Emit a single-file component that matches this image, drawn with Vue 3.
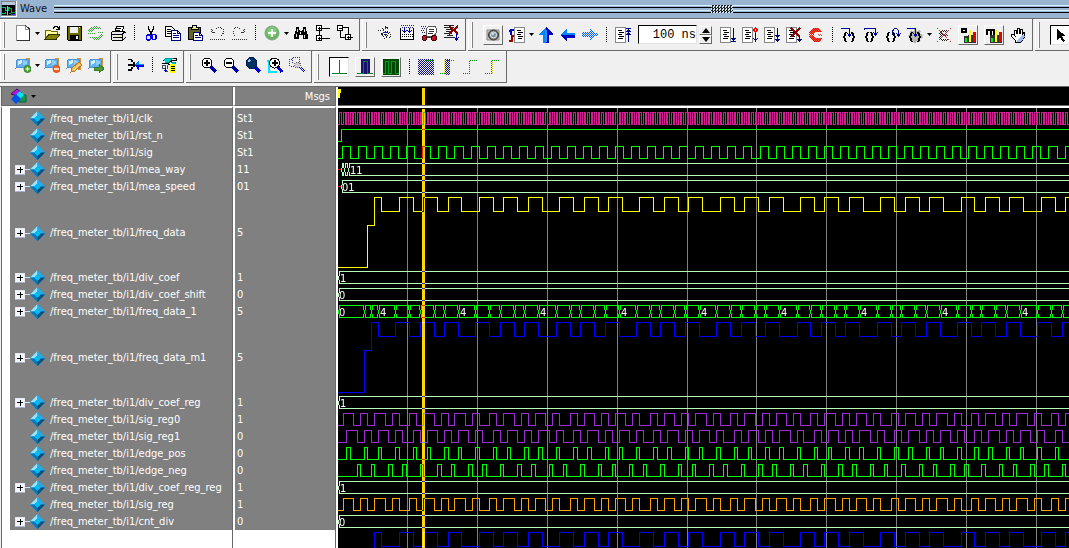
<script setup>
import { computed, onBeforeUnmount, onMounted, ref } from 'vue'

const ORIGIN = 338
const END = 2600
const CLK = 3.49

const span = ref(window.innerWidth - ORIGIN)
const measure = () => { span.value = window.innerWidth - ORIGIN }
onMounted(() => window.addEventListener('resize', measure))
onBeforeUnmount(() => window.removeEventListener('resize', measure))

const braceL = 'M4 5h2v1H5v3H4v2h1v3h1v1H4v-1H3v-3H2v-2h1V6h1z'
const braceR = 'M12 5h-2v1h1v3h1v2h-1v3h-1v1h2v-1h1v-3h1V9h-1V6h-1z'
const page = '<path d="M.5.500h10v15H.5z" fill="#fff" stroke="#888"/><path d="M3 3.500h4M4 5.500h5M3 7.500h4M4 9.500h5M3 11.500h5" stroke="#000"/>'
const flag = '<path d="M11 1h4v12h-3z" fill="#cf9440"/><path d="M12 2h1v10h-1z" fill="#f0c070"/><path d="M2 3l5-1 6 1v8l-6-1-6 1z" fill="#63b4ee" stroke="#4f90d6"/><path d="M3 4l4-1v3L3 8z" fill="#d8f1ff"/><path d="M8 3l4 1v3L8 8z" fill="#8fd0fa"/>'
const bars = '<path d="M4 8h12v8H4z" fill="#333"/><path d="M5 11h2v4H5z" fill="#0e0"/><path d="M9 3h2v12H9z" fill="#ff0"/><path d="M13 5h3v10h-3z" fill="#e00"/>'
const bug = '<circle cx="3.500" cy="13" r="2.500" fill="#c01030" stroke="#400"/><circle cx="13" cy="13" r="2.500" fill="#c01030" stroke="#400"/>'

function dither(x0, y0, rows, color) {
  let d = ''
  rows.forEach(([from, to], r) => {
    for (let x = from; x < to; x++) if ((x + r) % 2 === 0) d += `M${x0 + x} ${y0 + r}h1v1h-1z`
  })
  return `<path d="${d}" fill="${color}"/>`
}
const fill = (n, from, to) => Array.from({ length: n }, () => [from, to])

const icons = {
  fresh: '<path d="M2 1h8l4 4v11H2z" fill="#fff"/><path d="M1.500 16V.500H10M10.500 1v3.500H14" fill="none" stroke="#909090"/><path d="M2 15.500h12.500V4M14.500 4L10.500 .5" fill="none" stroke="#333"/>',
  open: '<path d="M1 5h5l1 1h6v3H5l-4 5z" fill="#ffff9c" stroke="#6b6b00"/><path d="M1 14.500L5 9.500h11l-4 5z" fill="#848400" stroke="#313100"/><path d="M9 3.500l2-2h2l2 2M15.500 1v3H12" fill="none" stroke="#000"/>',
  save: '<path d="M1 1h14v14H2l-1-1z" fill="#6b6b00" stroke="#000"/><path d="M4 2h8v6H4z" fill="#efefef"/><path d="M4 10h9v5H4z" fill="#000"/><path d="M10 11h2v3h-2z" fill="#eee"/><path d="M13 2h1v1h-1z" fill="#fff"/>',
  refresh: dither(0, 1, [[5, 10], [3, 12], [2, 14], [1, 6], [0, 5], [1, 4], [9, 16]], '#3fa33f') + dither(0, 8, [[0, 7], [12, 15], [11, 16], [10, 15], [2, 14], [4, 13], [6, 11]], '#3fa33f'),
  print: '<path d="M5 6l2-5h7l-2 6" fill="#fff" stroke="#000"/><path d="M7 3.500h4M6 5.500h4" stroke="#000"/><path d="M1 8l2-2h11l2 2v4l-3 3H2l-1-1z" fill="#e8e8e8" stroke="#000"/><path d="M1 9.500h11l3-3M3 12.500h9M12 15v-5" fill="none" stroke="#000"/><path d="M9 11h2v1H9z" fill="#ff0"/>',
  cut: '<path d="M5.500 1v3l4 6M10.500 1v3l-4 6" fill="none" stroke="#000" stroke-width="1.500"/><g fill="none" stroke="#00f" stroke-width="1.500"><ellipse cx="5.500" cy="12.500" rx="2" ry="2.500"/><ellipse cx="11" cy="12" rx="2" ry="2.500"/></g>',
  copy: '<path d="M.5 1.500h6l3 3v7h-9z" fill="#fff" stroke="#000"/><path d="M2 4.500h4M2 6.500h5M2 8.500h5" stroke="#000"/><path d="M6.500 5.500h6l3 3v7h-9z" fill="#fff" stroke="#00007b"/><path d="M8 8.500h3M8 10.500h6M8 12.500h6M12.500 6v2.500H15" fill="none" stroke="#00007b"/>',
  paste: '<path d="M1 2h12v12H1z" fill="#63632b" stroke="#000"/><path d="M4 2.500h1l1-2h3l1 2h1v2H4z" fill="#e7e78c" stroke="#000"/><path d="M6.500 7.500h6l3 3v5h-9z" fill="#fff" stroke="#00007b"/><path d="M8 10.500h3M8 12.500h6M12.500 8v2.500H15" fill="none" stroke="#00007b"/>',
  undo: '<path d="M2.500 3.500v4M3 7.500h4M3 5.500l2 2M7 3.500l2-1h3l2 2v4l-2 3M1 14.500h15" fill="none" stroke="#333" stroke-dasharray="1 1"/>',
  redo: '<path d="M13.500 3.500v4M13 7.500H9M13 5.500l-2 2M9 3.500l-2-1H4l-2 2v4l2 3M1 14.500h15" fill="none" stroke="#333" stroke-dasharray="1 1"/>',
  plus: '<g shape-rendering="auto"><circle cx="8" cy="8" r="7" fill="#62b75c" stroke="#8fa08c"/><circle cx="8" cy="7" r="5" fill="#82cd79"/><path d="M8 4v8M4 8h8" stroke="#fff" stroke-width="2"/></g>',
  find: '<path d="M3 2h3v2l1 2h2l1-2V2h3v3l2 5v4h-5v-4H6v4H1v-4l2-5z" fill="#000"/><path d="M4.500 4v3M3.500 9v3M11.500 4v3M11.500 10v3" stroke="#ddd"/><path d="M7.500 7v2" stroke="#fff"/>',
  tree: '<path d="M1.500.5h5v5h-5zM1.500 10.500h5v5h-5z" fill="#fff" stroke="#000"/><path d="M3 3.500h3M4.500 2v3M3 13.500h3M4.500 12v3M7 3.500h8M7 13.500h8M4.500 6v4" stroke="#000"/>',
  nodes: '<path d="M.5.5h5v5h-5zM8.500 9.500h5v5h-5z" fill="#fff" stroke="#000"/><path d="M2 3.500h3M10 12.500h3M11.500 11v3M6 2.500h5.500V9M3.500 6v6.500H8M14 12.500h2" fill="none" stroke="#000"/>',
  restart: '<path d="M1 5h3l3 3-3 2M4 8l4 6M5 3l4 4-2 3 4 3M8 1l3 2-3 3 5 2-3 3M11 8l4 2-4 4" fill="none" stroke="#222" stroke-dasharray="1 1"/><path d="M9 2L6 7h4l-2 5" fill="none" stroke="#22a" stroke-dasharray="2 1"/>',
  chip: '<path d="M1 7h14v7H1z" fill="#fff"/><path d="M1.500 3v11h13V3M1 14.500h14" fill="none" stroke="#000"/><path d="M2 .5h13M3 2.500h12" stroke="#228" stroke-dasharray="1 1"/><path d="M3 9.500h11M3 11.500h11" stroke="#000" stroke-dasharray="1 1"/><path d="M5.500 3v5M10.500 3v5M3.500 5.500l2 2 2-2M8.500 5.500l2 2 2-2" fill="none" stroke="#0000a0"/>',
  script: '<path d="M6 3l2-2h6l1 2v5l-2 3H5z" fill="#fff" stroke="#555"/><path d="M0 1.500h5M1 3.500h4M0 5.500h4M1 7.500h4" stroke="#226" stroke-dasharray="1 1"/><path d="M8 4.500h5M8 6.500h5M7 8.500h5M5 12.500h6" stroke="#333"/>' + bug,
  dropdoc: '<path d="M1 2.500h10M1 .5h10M3 4.500h8M3 6.500h6M1 8.500h8M4 10.500h6M1 12.500h10" stroke="#222"/><path d="M13.500 9v6M11.500 12.500l2 3 2-3" fill="none" stroke="#0000a0"/><path d="M6 1l9 8M15 1L6 9" stroke="#8b0000" stroke-width="2"/>',
  camera: '<g shape-rendering="auto"><path d="M2 3h12v10H2z" fill="#c2c2c2" stroke="#8a8a8a"/><circle cx="8.500" cy="8" r="5" fill="#777" stroke="#333"/><circle cx="8.500" cy="8" r="3" fill="#799097" stroke="#eee"/><circle cx="8" cy="7" r="1.200" fill="#cde"/></g>',
  step: '<path d="M5.500.5h10v15h-10z" fill="#fff" stroke="#888"/><path d="M8 3.500h4M9 5.500h5M8 7.500h4M9 9.500h5M9 11.500h4" stroke="#000"/><path d="M5 3H2v5M0 4.500L2 2.500" fill="none" stroke="#00c" stroke-width="2"/><path d="M0 14h3V9h2" fill="none" stroke="#900" stroke-width="2"/>',
  up: '<path d="M8 0l7 7v1h-4v8H5V8H1V7z" fill="#0084ff"/><path d="M8 0l7 7v1h-4v8H8z" fill="#0000bd"/><path d="M7 3h2v12H7z" fill="#2194ff"/>',
  left: '<path d="M0 8l7-6v4h8v5H7v4z" fill="#0084ff"/><path d="M0 8h15v3H7v4z" fill="#0000bd"/>',
  right: dither(0, 2, [[8, 9], [8, 11], [8, 12], [0, 13], [0, 15], [0, 16], [0, 15], [0, 13], [8, 12], [8, 11], [8, 9]], '#0060ff'),
  docup: page + '<path d="M13.500 2v13M11 1.500h5M11.500 5l2-2 2 2M11.500 8l2-2 2 2" fill="none" stroke="#00007b"/>',
  docdown: page + '<path d="M13.500 1v13M11 14.500h5M11.500 11l2 2 2-2" fill="none" stroke="#00007b"/>',
  docdiamond: page + '<path d="M13.500 6v8M11.500 11l2 3 2-3" fill="none" stroke="#00007b"/><path d="M13.500 1l2 2-2 2-2-2z" fill="#fff" stroke="#e00"/>',
  docall: page + '<path d="M13.500 1v14M11.500 8l2 2 2-2M11.500 12l2 2 2-2" fill="none" stroke="#00007b"/>',
  docstop: page + '<path d="M13.500 9v6M11.500 12l2 2 2-2" fill="none" stroke="#00007b"/><path d="M5 1l9 9M14 1L5 10" stroke="#8b0000" stroke-width="2"/>',
  stop: dither(1, 1, [[4, 10], [3, 11], [2, 12], [1, 13], [0, 6], [0, 5], [0, 5], [0, 5], [0, 5], [0, 6], [1, 13], [2, 12], [3, 11], [4, 10]], '#f01000') + dither(2, 1, [[4, 10], [3, 11], [2, 11], [1, 12], [0, 5], [0, 4], [8, 12], [8, 12], [0, 4], [0, 5], [1, 12], [2, 11], [3, 11], [4, 10]], '#e85040'),
  into: `<path d="${braceL}${braceR}"/><path d="M0 1.500h8.500V9M6.500 6.500l2 3 2-3" fill="none" stroke="#0000a0"/><path d="M7 7h3v1H7z" fill="#0000a0"/>`,
  over: `<path d="${braceL}"/><path d="${braceR}" transform="translate(-3 0)"/><path d="M1 3V1.500h11.500V8M10.500 5.500l2 3 2-3" fill="none" stroke="#0000a0"/><path d="M11 6h3v1h-3z" fill="#0000a0"/>`,
  out: `<path d="${braceL}" transform="translate(-1 0)"/><path d="${braceR}" transform="translate(-3 0)"/><path d="M7.500 8V4l2-2.500h2l2 2V9M11.500 6.500l2 3 2-3" fill="none" stroke="#0000a0"/><path d="M12 7h3v1h-3z" fill="#0000a0"/>`,
  gear: `<g shape-rendering="auto"><circle cx="8.500" cy="9" r="5.500" fill="#b5b5b5" stroke="#aaa" stroke-width="3" stroke-dasharray="2 2"/></g><path d="${braceL}${braceR}"/><path d="M0 1.500h8.500V9M6.500 6.500l2 3 2-3" fill="none" stroke="#0000a0"/><path d="M7 7h3v1H7z" fill="#0000a0"/>`,
  nobug: dither(2, 3, [[3, 9], [2, 10], [1, 4], [1, 4], [2, 9], [3, 10], [2, 5], [1, 4], [1, 4], [2, 10], [3, 9]], '#222') + '<path d="M1 1l14 14M15 1L1 15" stroke="#a33" stroke-dasharray="2 1"/>',
  perf: bars + '<path d="M1 8V1h6v5H1z"/><path d="M3 3h2v1H3zM3 6h5v3H3z" fill="#f0f0f0"/>',
  mem: bars + '<path d="M0 8V2h9v6H7V4H5.500v4h-2V4H2v4z"/>',
  hand: '<path d="M5 15v-2L1 9V7h2l2 2-1-6h2l1 4V1h2l1 6 1-5h1v6l2-3h1l-1 6-3 4z" fill="#fff" stroke="#000"/><path d="M6 14l6-6 3 1-4 6H7z" fill="#9ebcf0"/>',
  pointer: '<path d="M5 2v11l3-3 3 5 2-1-3-5h4z" fill="#000"/>',
  markAdd: flag + '<g shape-rendering="auto"><circle cx="12.500" cy="12" r="3.500" fill="#54a83c" stroke="#387d28"/><path d="M12.500 10v4M10.500 12h4" stroke="#fff"/></g>',
  markDel: flag + '<g shape-rendering="auto"><circle cx="12.500" cy="12" r="3.500" fill="#f26522" stroke="#d44a10"/><path d="M10 12h5" stroke="#fff" stroke-width="1.500"/></g>',
  markEdit: flag + '<path d="M5 15l1-4 7-6 3 3-7 6z" fill="#f3bb57" stroke="#b8792b"/><path d="M8 13l6-6" stroke="#ffe6a0"/>',
  markGo: flag + '<path d="M6 10h5V7l5 4.500-5 4.500v-3H6z" fill="#4d9b3b" stroke="#387d28"/>',
  merge: '<path d="M0 2h4v1h1v2h2v2H5V5H3V3H0zM0 12h3v-2h2V8h2v2H5v2H4v2H0zM0 7h7v2H0z"/><path d="M7 8l4-5v4h5v3h-5v4z" fill="#0084ff"/><path d="M7 8h9v2h-5v4z" fill="#0000e0"/>',
  memwave: '<path d="M2 4l3-3h10v2h-3L8 6H3M1 6h5l3 2 6-1" fill="none" stroke="#000"/><path d="M3 3l2-2h7L8 5H4M10 5h5l-1 2h-3" fill="#00d0d0" stroke="#009c9c"/><path d="M9 7h6v9H9z" fill="#ff0"/><path d="M10 9.500h4M10 11.500h4M10 13.500h4" stroke="#000"/><path d="M1.500 8.500h3v3h-3zM6.500 8v4M4 14.500h3" fill="none" stroke="#446"/><path d="M4.500 11v4M3 13.500h3" stroke="#00c"/>',
  zoomin: '<path d="M10 10l5 5" stroke="#0000a5" stroke-width="3"/><circle cx="6" cy="6" r="5" fill="#fff" stroke="#000"/><path d="M6 3v6M3 6h6" stroke="#000" stroke-width="2"/>',
  zoomout: '<path d="M10 10l5 5" stroke="#0000a5" stroke-width="3"/><circle cx="6" cy="6" r="5" fill="#fff" stroke="#000"/><path d="M3 6h6" stroke="#000" stroke-width="2"/>',
  zoomfull: '<path d="M10 10l5 5" stroke="#0000d5" stroke-width="3"/><circle cx="6.500" cy="6" r="5.500" fill="#003264" stroke="#00204a"/><path d="M3 5l2-2" stroke="#9cc4ee" stroke-width="2"/>',
  zoomcur: '<path d="M0 4h5M1 15h9M2 4v12" stroke="#00e5ff" stroke-width="2"/><path d="M11 10l4 5" stroke="#0000d5" stroke-width="3"/><circle cx="7.500" cy="6" r="5" fill="#fff" stroke="#000"/><path d="M7.500 3v6M4.500 6h6" stroke="#000" stroke-width="2"/>',
  zoomsel: '<path d="M.5 9V2.500h3V.500h7V6M2 9.500h4M3.500 3v4" fill="none" stroke="#22308c" stroke-dasharray="1 1"/><circle cx="8.500" cy="8" r="3" fill="#ccc" stroke="#666" stroke-dasharray="1 1"/>' + dither(10, 10, [[0, 3], [0, 4], [1, 5], [2, 6], [3, 6]], '#0000b0'),
  wline: '<path d="M1 14.500h16M8.500 1v13" stroke="#007b29"/>',
  wpulse: '<path d="M4 0h9v15H4z" fill="#14146b"/><path d="M0 14.500h6.500V2.500h4v12H16" fill="none" stroke="#008429"/>',
  wmulti: '<path d="M0 0h16v16H0z" fill="#004a00"/><path d="M0 14.500h2.500v-12h3v12h3v-12h4v12H16" fill="none" stroke="#009c29"/>',
  wblock: dither(0, 0, fill(16, 0, 16), '#10107b') + '<path d="M8 1.500h7" stroke="#0a0" stroke-dasharray="1 1"/>',
  wedge1: dither(5, 0, fill(16, 0, 5), '#10107b') + '<path d="M4.500 1v13" stroke="#dd0" stroke-dasharray="1 1"/><path d="M0 14.500h5M7 1.500h8" stroke="#090" stroke-dasharray="1 1"/>',
  wedge2: '<path d="M1 14.500h6.500v-13H15" fill="none" stroke="#080" stroke-dasharray="1 1"/>',
  wedge3: '<path d="M1 14.500h6.500v-13H15" fill="none" stroke="#080" stroke-dasharray="1 1"/><path d="M8.500 3v11" stroke="#cc0" stroke-dasharray="1 1"/>',
}

const b = (icon, label, extra = {}) => ({ kind: 'button', icon, label, ...extra })
const raised = { look: 'raised' }
const pressed = { look: 'pressed' }
const menu = { menu: true }
const sep = { kind: 'sep' }

const toolbars = [
  [
    [b('fresh', 'New', menu), b('open', 'Open'), b('save', 'Save'), b('refresh', 'Reload'), b('print', 'Print'), sep,
      b('cut', 'Cut'), b('copy', 'Copy'), b('paste', 'Paste'), b('undo', 'Undo'), b('redo', 'Redo'), sep,
      b('plus', 'Add selected to window', menu), b('find', 'Find'), b('tree', 'Collapse all'), b('nodes', 'Expand all')],
    [b('restart', 'Compile'), b('chip', 'Compile all'), b('script', 'Simulate'), b('dropdoc', 'Break simulation')],
    [b('camera', 'Snapshot', raised), b('step', 'Environment', menu), b('up', 'Up'), b('left', 'Back'), b('right', 'Forward'), sep,
      b('docup', 'Restart'), { kind: 'time' }, b('docdown', 'Run'), b('docdiamond', 'Continue run'), b('docall', 'Run all'),
      b('docstop', 'Break'), b('stop', 'Stop'), sep, b('into', 'Step into'), b('over', 'Step over'), b('out', 'Step out'),
      b('gear', 'Step current', menu), b('nobug', 'Debug'), b('perf', 'Performance profiling', raised), b('mem', 'Memory profiling', raised), b('hand', 'Pan')],
    [b('pointer', 'Select mode', pressed)],
  ],
  [
    [b('markAdd', 'Add bookmark', menu), b('markDel', 'Delete bookmark'), b('markEdit', 'Edit bookmark'), b('markGo', 'Go to bookmark')],
    [b('merge', 'Combine signals'), sep, b('memwave', 'Radix')],
    [b('zoomin', 'Zoom in'), b('zoomout', 'Zoom out'), b('zoomfull', 'Zoom full'), b('zoomcur', 'Zoom on cursor'), b('zoomsel', 'Zoom range')],
    [b('wline', 'Cursor mode', pressed), b('wpulse', 'Pulse mode', raised), b('wmulti', 'Multi mode', raised), sep,
      b('wblock', 'Cut wave'), b('wedge1', 'Insert pulse'), b('wedge2', 'Rising edge'), b('wedge3', 'Move edge')],
  ],
]
const isFlat = (group) => !group.some((item) => item.look)

const LIME = '#00ff00'
const PALE = '#b4ffb4'
const signals = [
  { name: 'clk', value: 'St1', type: 'clk', color: '#d02090' },
  { name: 'rst_n', value: 'St1', type: 'rst', color: LIME },
  { name: 'sig', value: 'St1', type: 'sig', color: LIME },
  { name: 'mea_way', value: '11', type: 'bus', color: PALE, cuts: [341, 344, 348], label: '11', at: 350, unknown: true },
  { name: 'mea_speed', value: '01', type: 'bus', color: PALE, cuts: [341], label: '01', at: 342, unknown: true },
  { name: 'freq_data', value: '5', type: 'analog', color: '#ffff00', shift: 0, tall: true },
  { name: 'div_coef', value: '1', type: 'bus', color: PALE, cuts: [338], label: '1', at: 340 },
  { name: 'div_coef_shift', value: '0', type: 'bus', color: PALE, cuts: [338], label: '0', at: 339 },
  { name: 'freq_data_1', value: '5', type: 'databus', color: LIME },
  { name: 'freq_data_m1', value: '5', type: 'analog', color: '#0000ff', shift: -1, tall: true },
  { name: 'div_coef_reg', value: '1', type: 'bus', color: PALE, cuts: [338], label: '1', at: 340 },
  { name: 'sig_reg0', value: '1', type: 'level', color: '#9932cc', on: [[0, 3], [5, 7], [9, 12], [14, 16], [19, 21]] },
  { name: 'sig_reg1', value: '0', type: 'level', color: '#9932cc', on: [[1, 4], [6, 8], [10, 13], [15, 17], [20, 22]] },
  { name: 'edge_pos', value: '0', type: 'level', color: LIME, on: [[1, 2], [6, 7], [10, 11], [15, 16], [20, 21]] },
  { name: 'edge_neg', value: '0', type: 'level', color: LIME, on: [[4, 5], [8, 9], [13, 14], [17, 18], [22, 23]] },
  { name: 'div_coef_reg_reg', value: '1', type: 'bus', color: PALE, cuts: [338], label: '1', at: 340 },
  { name: 'sig_reg', value: '1', type: 'level', color: '#ffa500', on: [[0, 3], [5, 7], [9, 12], [14, 16], [19, 21]] },
  { name: 'cnt_div', value: '0', type: 'bus', color: PALE, cuts: [338], label: '0', at: 339 },
]
const expandable = (s) => ['bus', 'databus', 'analog'].includes(s.type)

const px = (x) => Math.floor(x) - ORIGIN + 0.5
const tick = (n) => px(343.3 + CLK * n)

function square(edges, top, low) {
  let d = `M0 ${low}`
  edges.forEach((x, i) => { d += `H${x}V${i % 2 ? low : top}` })
  return d + `H${END}`
}
function busPath(cuts, y) {
  const t = y + 2.5
  const l = y + 14.5
  let d = ''
  cuts.forEach((a, i) => {
    const z = cuts[i + 1] ?? END
    d += `M${a} ${t + 4}V${l - 4}M${a + 1} ${t + 4}V${t}H${z - 1}V${t + 4}M${a + 1} ${l - 4}V${l}H${z - 1}V${l - 4}`
  })
  return d
}
const dataTicks = []
for (let n = 15; n < 600; n += 23) dataTicks.push(n, n + 4, n + 7, n + 11, n + 14, n + 18)

function build(s, y) {
  const top = y + 2.5
  const low = y + 14.5
  if (s.type === 'clk') {
    const e = []
    for (let i = 0; i < 1200; i++) e.push(px(339.81 + i * CLK / 2))
    return { d: square(e, top, low) }
  }
  if (s.type === 'rst') return { d: square([px(341)], low, top).replace(`M0 ${top}`, `M0 ${low}`).replace(`V${low}H${END}`, `V${top}H${END}`) }
  if (s.type === 'sig') {
    const e = []
    for (let i = 0; i < 280; i++) e.push(px(342.6 + i * 8.027))
    return { d: square(e, top, low) }
  }
  if (s.type === 'level') {
    const e = []
    for (let p = 0; p < 28; p++) s.on.forEach(([r, f]) => e.push(tick(r + 23 * p), tick(f + 23 * p)))
    return { d: square(e, top, low) }
  }
  if (s.type === 'analog') {
    const g = s.shift
    let d = `M0 ${y + 72.5}H${tick(7 + g)}V${y + 30.5}H${tick(9 + g)}V${top}H${tick(11 + g)}V${y + 16.5}`
    dataTicks.forEach((n, i) => { d += `H${tick(n + 1 + g)}V${i % 2 ? y + 16.5 : top}` })
    return { d: d + `H${END}` }
  }
  if (s.type === 'databus') {
    const cuts = [0.5, tick(6), tick(8), tick(10), ...dataTicks.map(tick)]
    const texts = [{ x: 1, y: y + 13, t: '0' }]
    for (let n = 10; n < 600; n += 23) texts.push({ x: tick(n) + 1.5, y: y + 13, t: '4' })
    return { d: busPath(cuts, y), texts }
  }
  return {
    d: busPath(s.cuts.map(px), y),
    texts: [{ x: s.at - ORIGIN, y: y + 13, t: s.label }],
    red: s.unknown ? `M0 ${y + 8.5}H3` : null,
  }
}

let y = 2
const traces = signals.map((s) => {
  const w = { color: s.color, texts: [], ...build(s, y) }
  y += s.tall ? 74 : 17
  return w
})
let tail = `M${tick(9)} ${y + 30}V${y + 2.5}H${tick(11)}V${y + 16.5}`
dataTicks.forEach((n, i) => { tail += `H${tick(n + 1)}V${i % 2 ? y + 16.5 : y + 2.5}` })
traces.push({ color: '#0000ff', d: tail, texts: [] })

const waves = computed(() => traces.map((w) => ({ ...w, texts: w.texts.filter((t) => t.x + 9 < span.value) })))
const grid = Array.from({ length: 30 }, (_, k) => px(407.9 + k * CLK * 20))
</script>

<template>
  <div class="window">
    <header class="title">
      <svg class="logo" width="16" height="16" shape-rendering="crispEdges" aria-hidden="true">
        <path d="M0 0h16v16H0z" fill="#fff" /><path d="M0 0h15v15H0z" fill="#848484" /><path d="M1 1h13v3H1z" fill="#b8c8d8" /><path d="M1 4h13v10H1z" fill="#000" />
        <path d="M1 6.500h3v3h3v-3h2M1 12.500h3v-2" fill="none" stroke="#0c6" /><path d="M6.500 5v9" stroke="#0ff" />
        <path d="M8 7.500h2v4h4M8 12.500h2" fill="none" stroke="#0a4" /><path d="M10 13.500h4" stroke="#33f" />
      </svg>
      <h1>Wave</h1>
      <div class="stripes"><span class="grip"></span></div>
    </header>

    <div v-for="(row, r) in toolbars" :key="r" class="toolrow">
      <div v-for="(group, g) in row" :key="g" class="group" :class="{ flat: isFlat(group), last: r === 0 && g === 3 }" role="toolbar">
        <template v-for="(item, i) in group" :key="i">
          <span v-if="item.kind === 'sep'" class="sep"></span>
          <div v-else-if="item.kind === 'time'" class="time">
            <input type="text" value="100 ns" aria-label="Run length">
            <div class="spin">
              <button type="button" aria-label="Increase run length"><svg width="8" height="5"><path d="M4 0l4 5H0z" /></svg></button>
              <button type="button" aria-label="Decrease run length"><svg width="8" height="5"><path d="M0 0h8L4 5z" /></svg></button>
            </div>
          </div>
          <template v-else>
            <button type="button" class="tool" :class="item.look" :aria-label="item.label">
              <svg width="16" height="16" viewBox="0 0 16 16" v-html="icons[item.icon]"></svg>
            </button>
            <button v-if="item.menu" type="button" class="drop" :aria-label="item.label + ' options'"><svg width="5" height="3"><path d="M0 0h5L2.500 3z" /></svg></button>
          </template>
        </template>
      </div>
    </div>

    <main class="panes">
      <div class="list">
        <table>
          <thead>
            <tr>
              <th class="name" scope="col">
                <button type="button" class="objects" aria-label="Signal options">
                  <svg width="16" height="16">
                    <path d="M8 7h7v7H8z" fill="#18984a" stroke="#063" /><path d="M0 6l6-5 5 4-5 3z" fill="#b01ce0" stroke="#4a0860" />
                    <path d="M9 3l4 4-4 4-4-4z" fill="#00e5ff" /><path d="M5 6l5 5-5 5-5-5z" fill="#0050e8" />
                  </svg>
                  <svg width="5" height="3"><path d="M0 0h5L2.500 3z" /></svg>
                </button>
              </th>
              <th class="value" scope="col">Msgs</th>
            </tr>
          </thead>
          <tbody>
            <tr class="lead"><td class="name"></td><td class="value"></td></tr>
            <tr v-for="s in signals" :key="s.name" :class="{ tall: s.tall }">
              <td class="name">
                <div class="cell">
                  <button v-if="expandable(s)" type="button" class="expand" :aria-label="'Expand ' + s.name"></button>
                  <span v-else class="noexpand"></span>
                  <svg class="gem" width="15" height="15" viewBox="0 0 14 14" aria-hidden="true">
                    <path d="M7 0l7 7-7 7-7-7z" fill="#0094d8" /><path d="M7 0v4L4 7H0z" fill="#9be4fa" /><path d="M7 0l7 7h-4L7 4z" fill="#28a8e4" />
                    <path d="M0 7h4l3 3v4z" fill="#0878b8" /><path d="M14 7h-4l-3 3v4z" fill="#004f80" /><path d="M7 4l3 3-3 3-3-3z" fill="#00bdf2" />
                  </svg>
                  <span>/freq_meter_tb/i1/{{ s.name }}</span>
                </div>
              </td>
              <td class="value">{{ s.value }}</td>
            </tr>
          </tbody>
        </table>
        <div class="rest"><span></span><span></span></div>
      </div>

      <div class="wave">
        <div class="ruler">
          <svg width="100%" height="18" shape-rendering="crispEdges" aria-hidden="true">
            <path d="M0 2h3v4H2v5H0z" fill="#ff0" /><path d="M84 1h3v17h-3z" fill="#ffd700" />
          </svg>
        </div>
        <svg class="plot" role="img" aria-label="Signal waveforms">
          <path v-for="x in grid" :key="x" :d="`M${x} 0V2000`" stroke="#808080" />
          <g v-for="(w, i) in waves" :key="i">
            <path :d="w.d" fill="none" :stroke="w.color" />
            <path v-if="w.red" :d="w.red" stroke="#f00" />
            <text v-for="t in w.texts" :key="t.x" :x="t.x" :y="t.y">{{ t.t }}</text>
          </g>
          <path class="cursor" d="M84 1h3v2000h-3z" fill="#ffd700" />
        </svg>
      </div>
    </main>
  </div>
</template>

<style>
body { background: #f0f0f0; overflow: hidden; }
</style>

<style scoped>
.window { display: flex; flex-direction: column; height: 100vh; overflow: hidden; background: #f0f0f0; font-family: "DejaVu Sans Condensed", "DejaVu Sans", sans-serif; font-size: 11px; }
.window * { box-sizing: border-box; }
svg { display: block; flex: none; }
button { border: 0; padding: 0; background: none; display: flex; align-items: center; justify-content: center; flex: none; }
.title { display: flex; align-items: center; height: 19px; background: #99b4d1; border-bottom: 1px solid #696969; flex: none; }
.logo { margin-left: 1px; }
h1 { margin: 0 7px 0 3px; font-size: 11px; line-height: 16px; font-weight: 400; color: #111; }
.stripes { flex: 1; height: 8px; background: linear-gradient(#d5f0ff 0 1px, transparent 1px 2px, #000 2px 3px, transparent 3px 5px, #d5f0ff 5px 6px, transparent 6px 7px, #000 7px); display: flex; justify-content: center; }
.grip { width: 22px; margin-left: 320px; background: #99b4d1 repeating-conic-gradient(#222 0 25%, #cfe4f5 0 50%) 0 0 / 3px 3px; }
.toolrow { display: flex; gap: 2px; height: 32px; flex: none; }
.group { display: flex; align-items: center; flex: none; padding: 0 3px 0 12px; border-right: 1px solid #696969; border-bottom: 1px solid #696969; box-shadow: inset 1px 1px #fff; background: linear-gradient(#fff, #fff) 3px 3px / 1px 26px no-repeat, linear-gradient(#808080, #808080) 4px 3px / 1px 26px no-repeat; }
.flat { padding-bottom: 3px; }
.last { flex: 1 0 auto; }
.tool { width: 22px; height: 22px; }
.tool svg { shape-rendering: crispEdges; }
.raised, .pressed { width: 20px; height: 20px; margin: 0 3px; border: 1px solid; border-color: #fff #696969 #696969 #fff; }
.pressed { background: #fff; border-color: #000 #e3e3e3 #e3e3e3 #000; }
.drop { width: 7px; height: 22px; }
.sep { width: 1px; height: 16px; margin: 0 5px; background: repeating-linear-gradient(#000 0 1px, transparent 1px 2px); }
.time { display: flex; align-items: center; padding: 0 5px 0 4px; gap: 2px; }
.time input { width: 59px; height: 19px; padding: 0; border: 1px solid; border-color: #000 #e3e3e3 #e3e3e3 #000; background: #fff; text-align: right; font: 12px "Liberation Mono", monospace; color: #000; }
.spin { width: 13px; }
.spin button { width: 13px; height: 9px; border: 1px solid; border-color: #fff #696969 #696969 #fff; }
.panes { flex: 1; min-height: 0; display: flex; margin-top: 3px; border-top: 1px solid #696969; background: #fff; overflow: hidden; }
.list { width: 336px; flex: none; border-left: 1px solid #f0f0f0; display: flex; flex-direction: column; }
table { width: 100%; border-collapse: separate; border-spacing: 0; table-layout: fixed; color: #fff; }
th, td { padding: 0; background: #808080; }
th { height: 19px; border-bottom: 1px solid #696969; font-weight: 400; }
.name { width: 232px; border-left: 1px solid #696969; border-right: 1px solid #696969; }
.value { border-left: 2px solid #fff; border-right: 1px solid #696969; text-align: right; padding-right: 5px; }
td.value { text-align: left; padding: 0 0 0 2px; }
td.name { background: linear-gradient(#fff, #fff) 0 0 / 8px 100% no-repeat #808080; }
tbody tr { height: 17px; line-height: 16px; }
tbody tr.tall { height: 74px; }
tbody tr.tall td { padding-top: 2px; }
tbody tr.lead { height: 4px; line-height: 0; }
.lead td { border-top: 2px solid #fff; }
.objects { margin-left: 9px; gap: 4px; }
.cell { display: flex; align-items: center; padding-left: 13px; white-space: nowrap; }
.gem { margin-right: 5px; }
.expand, .noexpand { width: 10px; height: 10px; margin-right: 5px; flex: none; }
.expand { border: 1px solid #e6eaf5; border-bottom-color: #a8b0cc; border-radius: 1px; background: linear-gradient(#000, #000) center / 6px 1px no-repeat, linear-gradient(#000, #000) center / 1px 6px no-repeat, #f4f6ff; }
.expand::after { content: ""; width: 5px; height: 1px; background: #ddd; flex: none; margin-right: -14px; }
.rest { flex: 1; display: flex; }
.rest span { width: 232px; border-left: 1px solid #696969; border-right: 1px solid #696969; }
.rest span + span { width: auto; flex: 1; border-left: 0; }
.wave { flex: 1; min-width: 0; margin-left: 2px; display: flex; flex-direction: column; }
.ruler { height: 19px; background: #000; border-bottom: 1px solid #696969; margin-bottom: 2px; flex: none; }
.plot { flex: 1; width: 100%; min-height: 0; background: #000; shape-rendering: crispEdges; isolation: isolate; }
.plot text { fill: #fff; font-size: 11px; }
.cursor { mix-blend-mode: difference; }
</style>
